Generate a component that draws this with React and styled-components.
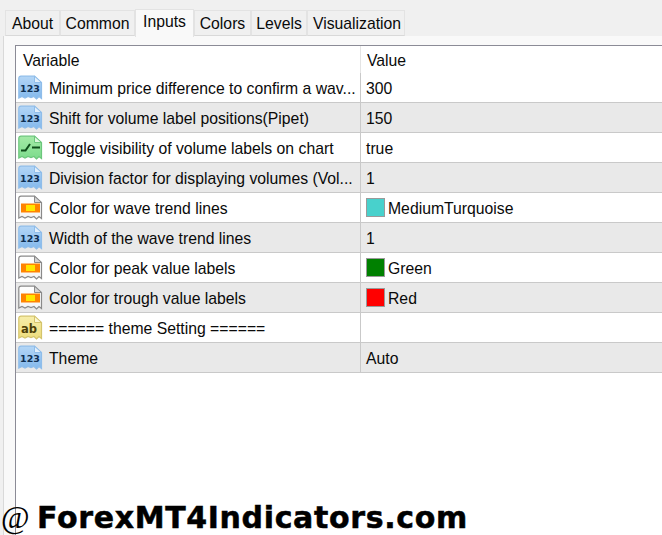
import React from "react";
import styled, { createGlobalStyle } from "styled-components";

const GlobalStyle = createGlobalStyle`
  html, body {
    margin: 0;
    padding: 0;
    height: 100%;
    overflow: hidden;
    background: #f0f0f0;
  }
  #root {
    height: 100%;
  }
`;

const Page = styled.div`
  position: relative;
  height: 535px;
  display: flex;
  flex-direction: column;
  overflow: hidden;
  font-family: "Liberation Sans", Arial, sans-serif;
  font-size: 15.75px;
  color: #0a0a0a;
`;

const TabBar = styled.div`
  display: flex;
  align-items: flex-end;
  height: 36px;
  padding-left: 5px;
  box-sizing: border-box;
`;

const Tab = styled.div`
  box-sizing: border-box;
  width: ${(p) => p.$width}px;
  height: ${(p) => (p.$active ? 28 : 26)}px;
  padding-top: ${(p) => (p.$active ? 3 : 4)}px;
  padding-left: ${(p) => p.$nudge || 0}px;
  margin-bottom: ${(p) => (p.$active ? -1 : 0)}px;
  text-align: center;
  background: ${(p) => (p.$active ? "#f9f9f9" : "#f0f0f0")};
  border: 1px solid #e3e3e3;
  border-bottom: ${(p) => (p.$active ? "none" : "1px solid #d9d9d9")};
  z-index: ${(p) => (p.$active ? 1 : 0)};
  white-space: nowrap;
`;

const Panel = styled.div`
  flex: 1;
  margin-left: 3px;
  padding: 9px 0 0 11px;
  background: #f9f9f9;
  border-left: 1px solid #d9d9d9;
  display: flex;
  min-height: 0;
`;

const List = styled.div`
  flex: 1;
  background: #fff;
  border-top: 1px solid #8b8b96;
  border-left: 1px solid #8b8b96;
`;

const Row = styled.div`
  display: grid;
  grid-template-columns: 345px 1fr;
  box-sizing: border-box;
  height: 30px;
  background: ${(p) => (p.$alt ? "#e9e9e9" : "#fff")};
  border-bottom: 1px solid #c9c9c9;
`;

const HeaderRow = styled.div`
  display: grid;
  grid-template-columns: 345px 1fr;
  height: 27px;
`;

const HeaderCell = styled.div`
  display: flex;
  align-items: center;
  padding-left: ${(p) => p.$pad}px;
  padding-top: 2px;
  box-sizing: border-box;
  border-right: ${(p) => (p.$divider ? "1px solid #e4e4e4" : "none")};
`;

const NameCell = styled.div`
  display: flex;
  align-items: center;
  gap: 6px;
  padding-left: 2px;
  border-right: 1px solid #c9c9c9;
  min-width: 0;
  white-space: nowrap;
`;

const CellText = styled.span`
  position: relative;
  top: 1px;
`;

const ValueCell = styled.div`
  display: flex;
  align-items: center;
  gap: 3px;
  padding-left: 5px;
  white-space: nowrap;
`;

const Swatch = styled.span`
  width: 19px;
  height: 19px;
  box-sizing: border-box;
  background: ${(p) => p.$color};
  border: 1px solid #9a9a9a;
`;

const Watermark = styled.div`
  position: absolute;
  left: 0;
  bottom: 0;
  width: 480px;
  height: 35px;
  display: flex;
  align-items: center;
  color: #000;
  white-space: nowrap;
`;

const At = styled.span`
  width: 37px;
  padding-left: 1px;
  box-sizing: border-box;
  font-family: "Liberation Serif", serif;
  font-size: 31px;
`;

const Site = styled.span`
  font-family: "DejaVu Sans", Verdana, sans-serif;
  font-weight: 700;
  font-size: 30px;
  letter-spacing: 0.65px;
  -webkit-text-stroke: 0.5px #000;
`;

const palette = {
  num: { top: "#b4d6f6", bottom: "#82b8ec", edge: "#8fbdea", fold: "#e2effb", ink: "#0e2f52" },
  bool: { top: "#a4eaa6", bottom: "#7cdc8c", edge: "#6cc67c", fold: "#dcf7dc", ink: "#0f4d1a" },
  color: { top: "#ffffff", bottom: "#f4f4f4", edge: "#8a8a8a", fold: "#d4d4d4", ink: "#333" },
  text: { top: "#f7eeaa", bottom: "#eedd7c", edge: "#d4c46c", fold: "#fbf6cf", ink: "#4d4008" },
};

// torn-page icon used by every row, the inside changes with the type
const TypeIcon = ({ type }) => {
  const c = palette[type];
  const gradId = `page-${type}`;
  return (
    <svg width="25" height="25" viewBox="0 0 25 25" style={{ flexShrink: 0 }}>
      <defs>
        <linearGradient id={gradId} x1="0" y1="0" x2="0" y2="1">
          <stop offset="0" stopColor={c.top} />
          <stop offset="1" stopColor={c.bottom} />
        </linearGradient>
      </defs>
      <path
        d="M0.8 3.5 Q0.8 1.2 3 1.2 L16.5 1.2 L23.5 7.5 L23.5 23.5 L21 21.5 L18.5 24 L16 21.5 L13 22.5 L10 21.5 L7 23 L4 21.5 L0.8 23 Z"
        fill={`url(#${gradId})`}
        stroke={c.edge}
        strokeWidth="1.2"
      />
      <path d="M16.5 1.2 L16.5 7.5 L23.5 7.5 Z" fill={c.fold} stroke={c.edge} strokeWidth="1" />
      {type === "num" && (
        <text
          x="12"
          y="17"
          textAnchor="middle"
          fontFamily="'DejaVu Sans', sans-serif"
          fontWeight="700"
          fontSize="9.5"
          fill={c.ink}
        >
          123
        </text>
      )}
      {type === "text" && (
        <text
          x="3"
          y="17.5"
          fontFamily="'DejaVu Sans', sans-serif"
          fontWeight="700"
          fontSize="11.5"
          fill={c.ink}
        >
          ab
        </text>
      )}
      {type === "bool" && (
        <path
          d="M3 15.5 L7.5 15.5 L12 9 M14 12.5 L22 12.5"
          fill="none"
          stroke={c.ink}
          strokeWidth="2"
        />
      )}
      {type === "color" && (
        <>
          <rect x="3" y="8.5" width="19" height="9" fill="#ff8400" />
          <rect x="8" y="10" width="9" height="6" fill="#ffe600" />
        </>
      )}
    </svg>
  );
};

const tabs = [
  { label: "About", width: 55 },
  { label: "Common", width: 75 },
  { label: "Inputs", width: 59, active: true },
  { label: "Colors", width: 57 },
  { label: "Levels", width: 56 },
  { label: "Visualization", width: 98, nudge: 2 },
];

const rows = [
  { type: "num", name: "Minimum price difference to confirm a wav...", value: "300" },
  { type: "num", name: "Shift for volume label positions(Pipet)", value: "150" },
  { type: "bool", name: "Toggle visibility of volume labels on chart", value: "true" },
  { type: "num", name: "Division factor for displaying volumes (Vol...", value: "1" },
  { type: "color", name: "Color for wave trend lines", value: "MediumTurquoise", swatch: "#48d1cc" },
  { type: "num", name: "Width of the wave trend lines", value: "1" },
  { type: "color", name: "Color for peak value labels", value: "Green", swatch: "#008000" },
  { type: "color", name: "Color for trough value labels", value: "Red", swatch: "#ff0000" },
  { type: "text", name: "====== theme Setting ======", value: "" },
  { type: "num", name: "Theme", value: "Auto" },
];

export default function App() {
  return (
    <Page>
      <GlobalStyle />
      <TabBar>
        {tabs.map((t) => (
          <Tab key={t.label} $width={t.width} $active={t.active} $nudge={t.nudge}>
            {t.label}
          </Tab>
        ))}
      </TabBar>
      <Panel>
        <List>
          <HeaderRow>
            <HeaderCell $pad={7} $divider>
              Variable
            </HeaderCell>
            <HeaderCell $pad={6}>Value</HeaderCell>
          </HeaderRow>
          {rows.map((r, i) => (
            <Row key={r.name} $alt={i % 2 === 1}>
              <NameCell>
                <TypeIcon type={r.type} />
                <CellText>{r.name}</CellText>
              </NameCell>
              <ValueCell>
                {r.swatch && <Swatch $color={r.swatch} />}
                <CellText>{r.value}</CellText>
              </ValueCell>
            </Row>
          ))}
        </List>
      </Panel>
      <Watermark>
        <At>@</At>
        <Site>ForexMT4Indicators.com</Site>
      </Watermark>
    </Page>
  );
}
